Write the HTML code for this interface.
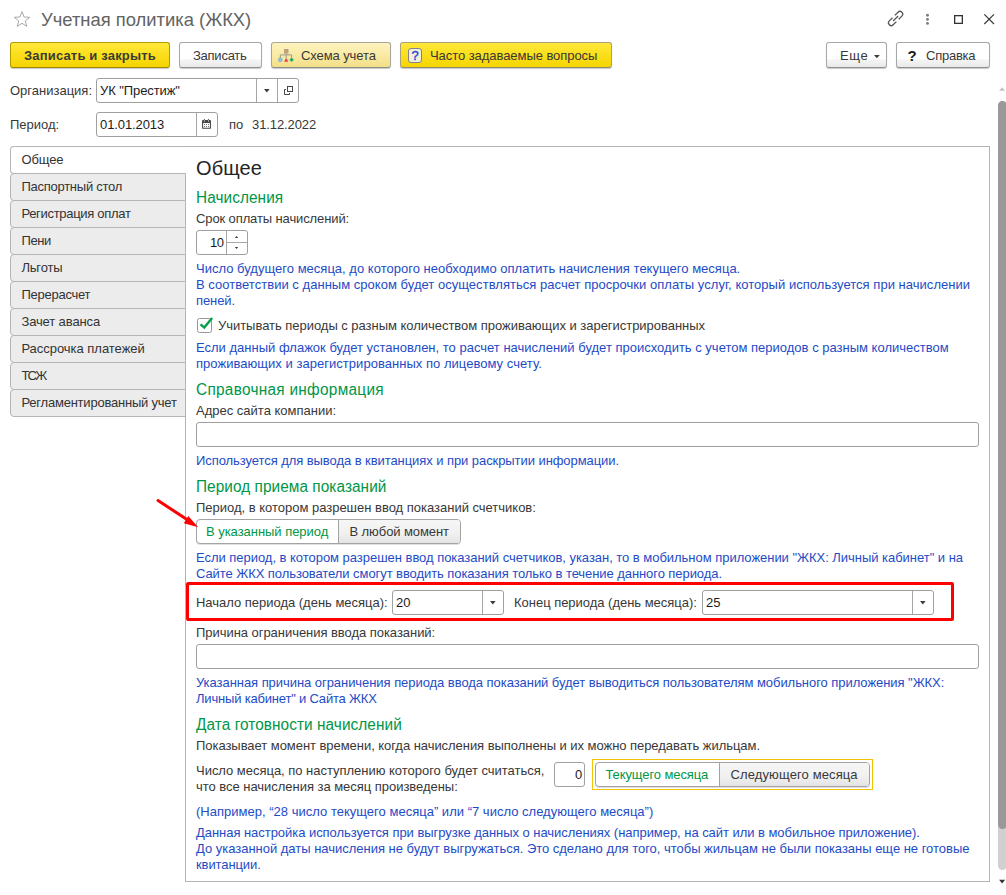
<!DOCTYPE html>
<html lang="ru">
<head>
<meta charset="utf-8">
<title>Учетная политика (ЖКХ)</title>
<style>
html,body{margin:0;padding:0;}
body{width:1006px;height:895px;position:relative;overflow:hidden;background:#fff;
 font-family:"Liberation Sans",sans-serif;font-size:13px;color:#383838;}
.abs{position:absolute;white-space:nowrap;}
.t{position:absolute;white-space:nowrap;line-height:16px;height:16px;}
.title{position:absolute;left:41px;top:8px;font-size:18.4px;line-height:24px;color:#636363;white-space:nowrap;}
.btn{position:absolute;top:42px;height:24px;box-sizing:content-box;border:1px solid #a8a8a8;border-bottom-color:#8f8f8f;border-radius:3px;
 background:linear-gradient(#ffffff 0%,#ffffff 66%,#f4f4f4 70%,#eaeaea 100%);box-shadow:0 1px 1px rgba(0,0,0,.22);
 line-height:24px;text-align:center;color:#333;white-space:nowrap;}
.btn span{position:absolute;top:0;}
.btn.y{background:linear-gradient(#ffe83a 0%,#fbdf1c 50%,#f5d400 100%);border-color:#b59a00;border-bottom-color:#a08800;font-weight:bold;color:#2f3030;}
.btn.y2{background:linear-gradient(#ffe83a 0%,#fbdf1c 50%,#f5d400 100%);border-color:#a9a07a;border-bottom-color:#8f8a72;}
.btn.p{background:linear-gradient(#fdf3bd 0%,#f9eaa4 50%,#f3df88 100%);border-color:#aaa79a;border-bottom-color:#8f8d85;}
.inp{position:absolute;box-sizing:border-box;border:1px solid #a0a0a0;border-radius:3px;background:#fff;}
.div{position:absolute;top:0;bottom:0;width:1px;background:#a6a6a6;}
.blue{color:#1e4bc6;}
.green{color:#009646;font-size:16px;line-height:20px;height:20px;transform:scaleX(.96);transform-origin:0 0;}
.h0{font-size:20px;line-height:24px;height:24px;color:#242424;}
.tab{position:absolute;left:10px;width:176px;height:28px;box-sizing:border-box;border:1px solid #b5b5b5;border-radius:4px 0 0 4px;
 background:#ececec;line-height:26px;padding-left:10.4px;color:#333;white-space:nowrap;}
.tab.act{background:#fff;border-right:0;z-index:3;}
.tg{position:absolute;height:25px;box-sizing:border-box;border:1px solid #a3a3a3;border-radius:4px;background:#fff;overflow:hidden;box-shadow:0 1px 0 rgba(0,0,0,.12);}
.tg .on{position:absolute;top:0;bottom:0;left:0;line-height:23px;color:#009646;text-align:center;white-space:nowrap;}
.tg .off{position:absolute;top:0;bottom:0;right:0;line-height:23px;color:#333;text-align:center;white-space:nowrap;border-left:1px solid #a3a3a3;background:linear-gradient(#f6f6f6 0%,#f1f1f1 55%,#e4e4e4 100%);}
.arr{position:absolute;width:0;height:0;border-left:2.75px solid transparent;border-right:2.75px solid transparent;border-top:3.3px solid #3c3c3c;}
</style>
</head>
<body>
<!-- title bar -->
<svg class="abs" style="left:12px;top:9px" width="20" height="20" viewBox="0 0 20 20"><path d="M10 2.6 L12.1 8 L17.8 8.3 L13.3 11.9 L14.8 17.4 L10 14.3 L5.2 17.4 L6.7 11.9 L2.2 8.3 L7.9 8 Z" fill="none" stroke="#a9a9a9" stroke-width="1"/></svg>
<div class="title">Учетная политика (ЖКХ)</div>

<!-- window icons -->
<svg class="abs" style="left:885px;top:8px" width="21" height="21" viewBox="0 0 21 21"><g transform="translate(10.6 10.5) rotate(-45)" fill="none" stroke="#555" stroke-width="1.25" stroke-linecap="butt"><path d="M-1.6 -2.75 H-6.15 A2.75 2.75 0 0 0 -6.15 2.75 H-1.6"/><path d="M1.6 -2.75 H6.15 A2.75 2.75 0 0 1 6.15 2.75 H1.6"/><path d="M-3.6 0 H3.6"/></g></svg>
<svg class="abs" style="left:925px;top:13px" width="5" height="14" viewBox="0 0 5 14"><circle cx="2.5" cy="2.3" r="1.45" fill="#7c7c7c"/><circle cx="2.5" cy="6.4" r="1.45" fill="#7c7c7c"/><circle cx="2.5" cy="10.4" r="1.45" fill="#7c7c7c"/></svg>
<svg class="abs" style="left:952px;top:13px" width="14" height="14" viewBox="0 0 14 14"><rect x="2.65" y="2.65" width="7.7" height="7.7" fill="none" stroke="#333" stroke-width="1.3"/></svg>
<svg class="abs" style="left:982px;top:12px" width="14" height="14" viewBox="0 0 14 14"><path d="M2.3 2.3 L12 12 M12 2.3 L2.3 12" stroke="#3a3a3a" stroke-width="1.2" fill="none"/></svg>

<!-- command bar -->
<div class="btn y" style="left:10px;width:158px;"></div>
<div class="btn" style="left:179px;width:81px;"></div>
<div class="btn p" style="left:271px;width:118px;"></div>
<div class="btn y2" style="left:400px;width:210px;"></div>
<div class="btn" style="left:826px;width:59px;"></div>
<div class="btn" style="left:896px;width:92px;"><span style="left:10.5px;top:0.5px;font-weight:bold;font-size:15px;color:#1a1a1a;">?</span></div>

<!-- header fields -->
<div class="inp" style="left:96px;top:78px;width:203px;height:25px;"><div class="div" style="left:159px"></div><div class="div" style="left:180px"></div></div>
<div class="inp" style="left:96px;top:112px;width:122px;height:25px;"><div class="div" style="left:99px"></div></div>

<!-- panel -->
<div class="abs" style="left:185px;top:146px;width:805px;height:736px;box-sizing:border-box;border:1px solid #b3b3b3;"></div>

<!-- content inputs -->
<div class="inp" style="left:196px;top:230px;width:52px;height:25px;"><div class="div" style="left:29px"></div><div class="abs" style="left:30px;top:11px;width:20px;height:1px;background:#a6a6a6"></div></div>
<div class="inp" style="left:196px;top:422px;width:783px;height:25px;"></div>
<div class="inp" style="left:392px;top:590px;width:112px;height:25px;"><div class="div" style="left:89px"></div></div>
<div class="inp" style="left:702px;top:590px;width:232px;height:25px;"><div class="div" style="left:209px"></div></div>
<div class="inp" style="left:196px;top:644px;width:783px;height:25px;"></div>
<div class="inp" style="left:554px;top:762px;width:31px;height:25px;"></div>
<!-- toggle 1 -->
<div class="tg" style="left:196px;top:519px;width:265px;"><div class="on" style="width:142px;"></div><div class="off" style="width:121px;"></div></div>
<!-- toggle 2 -->
<div class="abs" style="left:592px;top:759px;width:281px;height:31px;box-sizing:border-box;border:1px solid #f2c300;"></div>
<div class="tg" style="left:595px;top:762px;width:275px;"><div class="on" style="width:124px;"></div><div class="off" style="width:149px;"></div></div>


<!-- tabs -->
<div class="tab act" style="top:146px;"><span id="tab0" style="letter-spacing:-0.120px;">Общее</span></div>
<div class="tab" style="top:173px;"><span id="tab1" style="letter-spacing:-0.253px;">Паспортный стол</span></div>
<div class="tab" style="top:200px;"><span id="tab2" style="letter-spacing:-0.306px;">Регистрация оплат</span></div>
<div class="tab" style="top:227px;"><span id="tab3" style="letter-spacing:-0.350px;">Пени</span></div>
<div class="tab" style="top:254px;"><span id="tab4" style="letter-spacing:-0.167px;">Льготы</span></div>
<div class="tab" style="top:281px;"><span id="tab5" style="letter-spacing:-0.250px;">Перерасчет</span></div>
<div class="tab" style="top:308px;"><span id="tab6" style="letter-spacing:-0.117px;">Зачет аванса</span></div>
<div class="tab" style="top:335px;"><span id="tab7" style="letter-spacing:-0.028px;">Рассрочка платежей</span></div>
<div class="tab" style="top:362px;"><span id="tab8" style="letter-spacing:-1.733px;">ТСЖ</span></div>
<div class="tab" style="top:389px;"><span id="tab9" style="letter-spacing:-0.217px;">Регламентированный учет</span></div>
<!-- text -->
<div id="lorg" class="t" style="left:10px;top:83px;">Организация:</div>
<div id="vorg" class="t" style="left:100px;top:83px;color:#1c1c1c;letter-spacing:-0.083px;">УК "Престиж"</div>
<div id="lper" class="t" style="left:10px;top:117px;">Период:</div>
<div id="vper" class="t" style="left:100px;top:117px;color:#1c1c1c;letter-spacing:-0.100px;">01.01.2013</div>
<div id="po" class="t" style="left:229px;top:117px;">по</div>
<div id="vper2" class="t" style="left:252px;top:117px;letter-spacing:-0.100px;">31.12.2022</div>
<div id="bt1" class="t" style="left:24px;top:48px;font-weight:bold;color:#3a3c34;letter-spacing:0.172px;">Записать и закрыть</div>
<div id="bt2" class="t" style="left:193px;top:48px;letter-spacing:-0.250px;">Записать</div>
<div id="bt3" class="t" style="left:301px;top:48px;letter-spacing:-0.091px;">Схема учета</div>
<div id="bt4" class="t" style="left:430px;top:48px;letter-spacing:-0.058px;">Часто задаваемые вопросы</div>
<div id="bt5" class="t" style="left:840px;top:48px;letter-spacing:0.600px;">Еще</div>
<div id="bt6" class="t" style="left:926px;top:48px;letter-spacing:-0.243px;">Справка</div>
<div id="tg1a" class="t" style="left:206px;top:524px;color:#009646;letter-spacing:-0.039px;">В указанный период</div>
<div id="tg1b" class="t" style="left:349.5px;top:524px;letter-spacing:-0.086px;">В любой момент</div>
<div id="tg2a" class="t" style="left:605.5px;top:767px;color:#009646;letter-spacing:-0.100px;">Текущего месяца</div>
<div id="tg2b" class="t" style="left:730.5px;top:767px;letter-spacing:0.118px;">Следующего месяца</div>
<div id="h0" class="t h0" style="left:196px;top:156px;letter-spacing:0.100px;">Общее</div>
<div id="g1" class="t green" style="left:196px;top:188px;letter-spacing:0.080px;">Начисления</div>
<div id="l1" class="t" style="left:196px;top:211px;letter-spacing:-0.113px;">Срок оплаты начислений:</div>
<div id="v10" class="t" style="left:210.1px;top:235px;color:#1c1c1c;letter-spacing:-0.6px;">10</div>
<div id="b1" class="t blue" style="left:196px;top:261px;letter-spacing:0.016px;">Число будущего месяца, до которого необходимо оплатить начисления текущего месяца.</div>
<div id="b2" class="t blue" style="left:196px;top:277px;letter-spacing:0.030px;">В соответствии с данным сроком будет осуществляться расчет просрочки оплаты услуг, который используется при начислении</div>
<div id="b3" class="t blue" style="left:196px;top:293px;letter-spacing:-0.100px;">пеней.</div>
<div id="cb" class="t" style="left:218px;top:318px;letter-spacing:-0.031px;">Учитывать периоды с разным количеством проживающих и зарегистрированных</div>
<div id="b4" class="t blue" style="left:196px;top:340px;letter-spacing:0.004px;">Если данный флажок будет установлен, то расчет начислений будет происходить с учетом периодов с разным количеством</div>
<div id="b5" class="t blue" style="left:196px;top:356px;letter-spacing:0.033px;">проживающих и зарегистрированных по лицевому счету.</div>
<div id="g2" class="t green" style="left:196px;top:380px;letter-spacing:0.300px;">Справочная информация</div>
<div id="l2" class="t" style="left:196px;top:403px;letter-spacing:0.005px;">Адрес сайта компании:</div>
<div id="b6" class="t blue" style="left:196px;top:453px;letter-spacing:-0.069px;">Используется для вывода в квитанциях и при раскрытии информации.</div>
<div id="g3" class="t green" style="left:196px;top:477px;letter-spacing:0.065px;">Период приема показаний</div>
<div id="l3" class="t" style="left:196px;top:500px;letter-spacing:-0.012px;">Период, в котором разрешен ввод показаний счетчиков:</div>
<div id="b7" class="t blue" style="left:196px;top:550px;letter-spacing:-0.032px;">Если период, в котором разрешен ввод показаний счетчиков, указан, то в мобильном приложении "ЖКХ: Личный кабинет" и на</div>
<div id="b8" class="t blue" style="left:196px;top:566px;letter-spacing:-0.070px;">Сайте ЖКХ пользователи смогут вводить показания только в течение данного периода.</div>
<div id="l4" class="t" style="left:196px;top:595px;letter-spacing:-0.017px;">Начало периода (день месяца):</div>
<div id="v20" class="t" style="left:396px;top:595px;color:#1c1c1c;">20</div>
<div id="l5" class="t" style="left:514px;top:595px;letter-spacing:-0.021px;">Конец периода (день месяца):</div>
<div id="v25" class="t" style="left:706px;top:595px;color:#1c1c1c;">25</div>
<div id="l6" class="t" style="left:196px;top:625px;letter-spacing:-0.044px;">Причина ограничения ввода показаний:</div>
<div id="b9" class="t blue" style="left:196px;top:675px;letter-spacing:-0.053px;">Указанная причина ограничения периода ввода показаний будет выводиться пользователям мобильного приложения "ЖКХ:</div>
<div id="b10" class="t blue" style="left:196px;top:691px;letter-spacing:-0.189px;">Личный кабинет" и Сайта ЖКХ</div>
<div id="g4" class="t green" style="left:196px;top:715px;letter-spacing:0.073px;">Дата готовности начислений</div>
<div id="l7" class="t" style="left:196px;top:738px;letter-spacing:-0.048px;">Показывает момент времени, когда начисления выполнены и их можно передавать жильцам.</div>
<div id="l8" class="t" style="left:196px;top:763px;letter-spacing:-0.022px;">Число месяца, по наступлению которого будет считаться,</div>
<div id="l9" class="t" style="left:196px;top:779px;letter-spacing:-0.032px;">что все начисления за месяц произведены:</div>
<div id="v0" class="t" style="left:575px;top:767px;color:#1c1c1c;">0</div>
<div id="b11" class="t blue" style="left:196px;top:804px;letter-spacing:0.013px;">(Например, “28 число текущего месяца” или “7 число следующего месяца”)</div>
<div id="b12" class="t blue" style="left:196px;top:825px;letter-spacing:-0.043px;">Данная настройка используется при выгрузке данных о начислениях (например, на сайт или в мобильное приложение).</div>
<div id="b13" class="t blue" style="left:196px;top:841px;letter-spacing:-0.017px;">До указанной даты начисления не будут выгружаться. Это сделано для того, чтобы жильцам не были показаны еще не готовые</div>
<div id="b14" class="t blue" style="left:196px;top:857px;letter-spacing:-0.100px;">квитанции.</div>
<!-- checkbox -->
<div class="abs" style="left:197px;top:318px;width:15px;height:15px;box-sizing:border-box;border:1px solid #979797;border-radius:2.5px;background:#fff;"></div>
<svg class="abs" style="left:196px;top:315px" width="18" height="18" viewBox="0 0 18 18"><path d="M4.5 9.3 L8.3 12.6 L16.1 2.9" fill="none" stroke="#06a04c" stroke-width="2.4" stroke-linejoin="miter"/></svg>

<!-- red highlight -->
<div class="abs" style="left:186px;top:582px;width:768px;height:39px;box-sizing:border-box;border:3px solid #ff0000;border-radius:2px;"></div>
<!-- red arrow -->
<svg class="abs" style="left:150.7px;top:490.8px" width="60" height="50" viewBox="0 0 60 50"><path d="M7 9.5 L39 30.5" stroke="#ff0000" stroke-width="3" stroke-linecap="round" fill="none"/><path d="M47.2 36.3 L32.8 32.3 L37.3 24.9 Z" fill="#ff0000"/></svg>

<!-- dropdown arrows -->
<svg class="abs" style="left:262.9px;top:87.9px" width="8" height="6" viewBox="0 0 8 6"><path d="M1 1 H6.6 L3.8 4.4 Z" fill="#3c3c3c"/></svg>
<svg class="abs" style="left:488.6px;top:599.9px" width="8" height="6" viewBox="0 0 8 6"><path d="M1 1 H6.6 L3.8 4.4 Z" fill="#3c3c3c"/></svg>
<svg class="abs" style="left:918.7px;top:599.9px" width="8" height="6" viewBox="0 0 8 6"><path d="M1 1 H6.6 L3.8 4.4 Z" fill="#3c3c3c"/></svg>
<svg class="abs" style="left:873.1px;top:53.6px" width="8" height="6" viewBox="0 0 8 6"><path d="M1 1 H6.8 L3.9 4.2 Z" fill="#3c3c3c"/></svg>
<!-- spinner arrows -->
<svg class="abs" style="left:234px;top:235px" width="6" height="16" viewBox="0 0 6 16"><path d="M0.8 3 L2.5 0.9 L4.2 3 Z M0.8 11.9 L2.5 14 L4.2 11.9 Z" fill="#3c3c3c"/></svg>

<!-- open icon -->
<svg class="abs" style="left:283px;top:85px" width="12" height="12" viewBox="0 0 12 12" fill="none" stroke="#484848" stroke-width="1"><rect x="4.5" y="1.5" width="5" height="5"/><path d="M3 4.5 H1.5 V9.5 H6.5 V8"/></svg>
<!-- calendar icon -->
<svg class="abs" style="left:201px;top:118px" width="12" height="12" viewBox="0 0 12 12"><rect x="1.05" y="1.9" width="8.9" height="8.9" rx=".9" fill="#444"/><rect x="2.1" y="4.9" width="6.8" height="4.8" rx=".4" fill="#fff"/><rect x="2.9" y=".9" width="1.1" height="1.6" rx=".5" fill="#444"/><rect x="6.9" y=".9" width="1.1" height="1.6" rx=".5" fill="#444"/><ellipse cx="3.45" cy="2.9" rx=".5" ry=".7" fill="#fff"/><ellipse cx="7.45" cy="2.9" rx=".5" ry=".7" fill="#fff"/><g fill="#444"><circle cx="3.5" cy="6.4" r=".52"/><circle cx="5.5" cy="6.4" r=".52"/><circle cx="7.5" cy="6.4" r=".52"/><circle cx="3.5" cy="8.4" r=".52"/><circle cx="5.5" cy="8.4" r=".52"/><circle cx="7.5" cy="8.4" r=".52"/></g></svg>

<!-- schema icon -->
<svg class="abs" style="left:277px;top:48px" width="18" height="15" viewBox="0 0 18 15"><path d="M9.2 5.2 V11 M3.3 10 V6.9 H14.6 V9.6" fill="none" stroke="#9a9c8e" stroke-width="1"/><rect x="7.4" y="1.4" width="3.6" height="3.6" fill="#e9a04a" stroke="#9a9c8e" stroke-width=".8"/><circle cx="3.3" cy="11.8" r="1.9" fill="#8cc4f0" stroke="#6a9bd0" stroke-width=".6"/><path d="M7.3 13.7 L8.3 11 H10.1 L11.1 13.7 Z" fill="#e0444a"/><path d="M14.6 9.5 L16.9 11.8 L14.6 14.1 L12.3 11.8 Z" fill="#1fae78"/></svg>
<!-- faq icon -->
<div class="abs" style="left:408px;top:48.3px;width:14px;height:14.4px;box-sizing:border-box;border:1px solid #80808e;border-radius:3px;background:#f3efd9;color:#2343dd;font-size:13px;line-height:13px;text-align:center;-webkit-text-stroke:0.35px #2343dd;">?</div>

<!-- scroll arrows -->
<svg class="abs" style="left:998px;top:86px" width="8" height="6" viewBox="0 0 8 6"><path d="M1.1 4.8 L4.1 1.2 L7.1 4.8 Z" fill="#c2c2c2"/></svg>
<svg class="abs" style="left:998px;top:879px" width="8" height="6" viewBox="0 0 8 6"><path d="M1.1 .8 L4.1 4.4 L7.1 .8 Z" fill="#333"/></svg>

<!-- scrollbar -->
<div class="abs" style="left:998px;top:101px;width:9px;height:769px;border-radius:4.5px;background:#d0d0d0;"></div>
<div class="abs" style="left:998px;top:101px;width:9px;height:728px;border-radius:4.5px;background:#999;"></div>

</body>
</html>
